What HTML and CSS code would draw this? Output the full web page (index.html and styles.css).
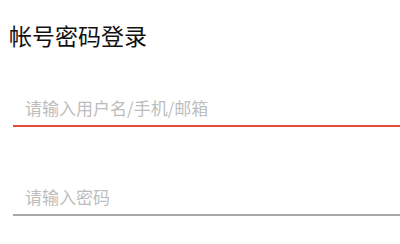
FILE: index.html
```html
<!DOCTYPE html>
<html lang="zh-CN">
<head>
<meta charset="utf-8">
<title>帐号密码登录</title>
<link rel="stylesheet" href="styles.css">
</head>
<body>
<main class="page">
  <h1 class="title">帐号密码登录</h1>
  <form class="form">
    <div class="field field-active">
      <input class="input" type="text" placeholder="请输入用户名/手机/邮箱">
    </div>
    <div class="field">
      <input class="input" type="password" placeholder="请输入密码">
    </div>
  </form>
</main>
</body>
</html>
```

FILE: styles.css
```css
* { box-sizing: border-box; }
html, body {
  margin: 0;
  padding: 0;
  background: #ffffff;
}
body {
  font-family: "Noto Sans CJK SC", "Noto Sans", sans-serif;
}
.page {
  padding: 24px 0 0 9px;
}
.title {
  margin: 0;
  font-size: 23px;
  line-height: 23px;
  font-weight: 400;
  color: #111111;
}
.form {
  margin: 42px 0 0 4px;
  display: flex;
  flex-direction: column;
  gap: 51px;
}
.field {
  border-bottom: 2px solid #a9a9a9;
}
.field-active {
  border-bottom-color: #e94a3d;
}
.input {
  display: block;
  width: 100%;
  height: 36px;
  border: 0;
  outline: none;
  padding: 0 0 0 12px;
  margin: 0;
  background: transparent;
  font-family: "Noto Sans CJK SC", "Noto Sans", sans-serif;
  font-size: 17px;
  color: #333333;
}
.input::placeholder {
  color: #bdbdbd;
  opacity: 1;
}
```
